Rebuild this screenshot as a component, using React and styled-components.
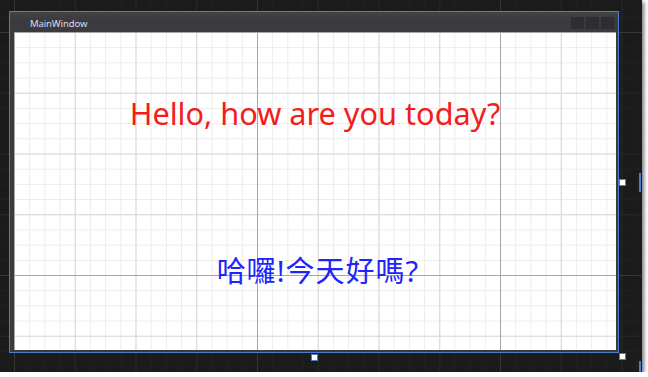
import React from 'react'
import styled, { createGlobalStyle } from 'styled-components'

const GlobalStyle = createGlobalStyle`
  html, body {
    margin: 0;
    padding: 0;
    background: #ffffff;
  }
  body {
    font-family: "Noto Sans", "Liberation Sans", sans-serif;
  }
`;

// grid steps used by the designer surface
const MINOR = '15.1875px';
const MAJOR = '60.75px';
const SUPER = '243px';

const gridLayers = (minor, major, sup) => `
  background-image:
    linear-gradient(to right, ${sup} 1px, transparent 1px),
    linear-gradient(to bottom, ${sup} 1px, transparent 1px),
    linear-gradient(to right, ${major} 1px, transparent 1px),
    linear-gradient(to bottom, ${major} 1px, transparent 1px),
    linear-gradient(to right, ${minor} 1px, transparent 1px),
    linear-gradient(to bottom, ${minor} 1px, transparent 1px);
  background-size:
    ${SUPER} ${SUPER}, ${SUPER} ${SUPER},
    ${MAJOR} ${MAJOR}, ${MAJOR} ${MAJOR},
    ${MINOR} ${MINOR}, ${MINOR} ${MINOR};
`;

const Surface = styled.div`
  position: relative;
  box-sizing: border-box;
  width: 642px;
  height: 372px;
  padding: 11px 0 0 9px;
  background-color: #1b1b1b;
  ${gridLayers('#202020', '#272727', '#363636')}
  background-position: 14px 32px;
  box-shadow: 2px 2px 4px rgba(0, 0, 0, 0.55);
  display: flex;
  align-items: flex-start;
`;

const Window = styled.div`
  box-sizing: border-box;
  width: 610px;
  height: 342px;
  border: 1px solid #4e7dce;
  background: #3a3a3f;
  display: flex;
  flex-direction: column;
`;

const TitleBar = styled.div`
  height: 20px;
  flex: none;
  display: flex;
  align-items: flex-start;
  padding-left: 20px;
  background: linear-gradient(#434348, #3a3a3f 40%);
`;

const Title = styled.span`
  margin-top: 6px;
  font-family: "Noto Sans", sans-serif;
  font-size: 9.5px;
  line-height: 11px;
  color: #dcdcec;
  letter-spacing: -0.1px;
`;

const Captions = styled.div`
  margin-left: auto;
  margin-right: 4px;
  margin-top: 5px;
  display: flex;
  gap: 2px;
`;

const CaptionButton = styled.div`
  width: 13px;
  height: 12px;
  background: #2d2d32;
`;

const Client = styled.div`
  flex: 1;
  margin: 0 2px 2px 4px;
  background-color: #ffffff;
  ${gridLayers('#ececec', '#d8d8d8', '#a6a6a6')}
  display: flex;
  flex-direction: column;
  align-items: center;
`;

const Greeting = styled.div`
  margin-top: 61px;
  font-family: "Noto Sans", sans-serif;
  font-size: ${p => p.size}px;
  line-height: 40px;
  color: ${p => p.color};
  white-space: nowrap;
`;

const Chinese = styled.div`
  margin-top: 122px;
  padding-left: 6px;
  font-family: "Noto Sans", "Noto Sans CJK TC", sans-serif;
  font-size: 29px;
  line-height: 32px;
  letter-spacing: 1px;
  color: #2222fb;
  white-space: nowrap;
`;

const Handle = styled.div`
  position: absolute;
  left: ${p => p.x}px;
  top: ${p => p.y}px;
  box-sizing: border-box;
  width: 7px;
  height: 7px;
  background: #ffffff;
  border: 1px solid #4e7dce;
`;

const Marker = styled.div`
  position: absolute;
  left: ${p => p.x}px;
  top: ${p => p.y}px;
  width: 2px;
  height: ${p => p.h}px;
  background: #4e7dce;
`;

function App() {
  return (
    <>
      <GlobalStyle />
      <Surface>
        <Window>
          <TitleBar>
            <Title>MainWindow</Title>
            <Captions>
              <CaptionButton />
              <CaptionButton />
              <CaptionButton />
            </Captions>
          </TitleBar>
          <Client>
            <Greeting size={30.7} color="#f41c1c">Hello, how are you today?</Greeting>
            <Chinese>哈囉!今天好嗎?</Chinese>
          </Client>
        </Window>
        <Handle x={619} y={179} />
        <Handle x={311} y={354} />
        <Handle x={619} y={353} />
        <Marker x={639} y={173} h={19} />
        <Marker x={639} y={361} h={11} />
      </Surface>
    </>
  );
}

export default App;
